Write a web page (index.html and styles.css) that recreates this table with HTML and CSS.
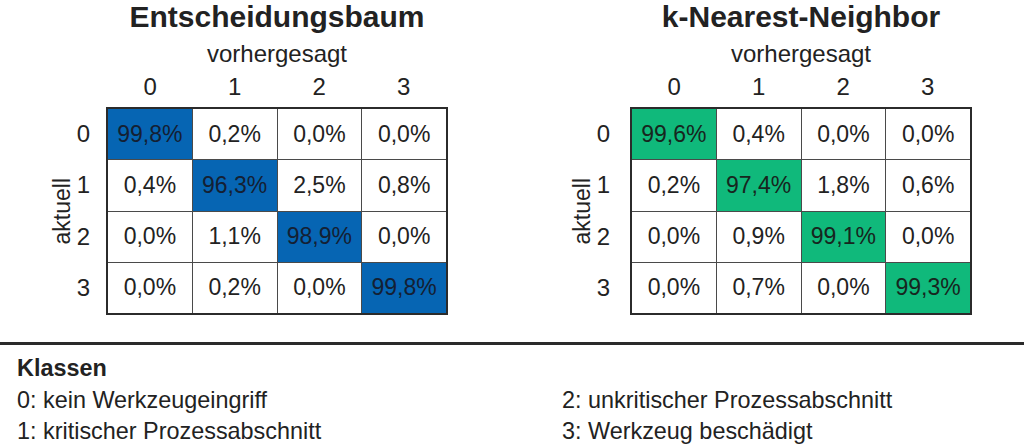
FILE: index.html
```html
<!DOCTYPE html>
<html lang="de">
<head>
<meta charset="utf-8">
<title>Konfusionsmatrizen</title>
<link rel="stylesheet" href="styles.css">
</head>
<body>
<main class="page">
  <section class="charts">
    <div class="panel panel--tree">
      <h2 class="title">Entscheidungsbaum</h2>
      <div class="subtitle">vorhergesagt</div>
      <div class="col-heads"><span>0</span><span>1</span><span>2</span><span>3</span></div>
      <div class="axis-label">aktuell</div>
      <div class="row-heads"><span>0</span><span>1</span><span>2</span><span>3</span></div>
      <div class="matrix matrix--blue">
        <div class="cell hit">99,8%</div><div class="cell">0,2%</div><div class="cell">0,0%</div><div class="cell">0,0%</div>
        <div class="cell">0,4%</div><div class="cell hit">96,3%</div><div class="cell">2,5%</div><div class="cell">0,8%</div>
        <div class="cell">0,0%</div><div class="cell">1,1%</div><div class="cell hit">98,9%</div><div class="cell">0,0%</div>
        <div class="cell">0,0%</div><div class="cell">0,2%</div><div class="cell">0,0%</div><div class="cell hit">99,8%</div>
      </div>
    </div>
    <div class="panel panel--knn">
      <h2 class="title">k-Nearest-Neighbor</h2>
      <div class="subtitle">vorhergesagt</div>
      <div class="col-heads"><span>0</span><span>1</span><span>2</span><span>3</span></div>
      <div class="axis-label">aktuell</div>
      <div class="row-heads"><span>0</span><span>1</span><span>2</span><span>3</span></div>
      <div class="matrix matrix--green">
        <div class="cell hit">99,6%</div><div class="cell">0,4%</div><div class="cell">0,0%</div><div class="cell">0,0%</div>
        <div class="cell">0,2%</div><div class="cell hit">97,4%</div><div class="cell">1,8%</div><div class="cell">0,6%</div>
        <div class="cell">0,0%</div><div class="cell">0,9%</div><div class="cell hit">99,1%</div><div class="cell">0,0%</div>
        <div class="cell">0,0%</div><div class="cell">0,7%</div><div class="cell">0,0%</div><div class="cell hit">99,3%</div>
      </div>
    </div>
  </section>
  <hr class="divider">
  <section class="legend">
    <h3 class="legend-title">Klassen</h3>
    <ul class="legend-list">
      <li>0: kein Werkzeugeingriff</li>
      <li>1: kritischer Prozessabschnitt</li>
      <li>2: unkritischer Prozessabschnitt</li>
      <li>3: Werkzeug beschädigt</li>
    </ul>
  </section>
</main>
</body>
</html>
```

FILE: styles.css
```css
* { box-sizing: border-box; }

html, body {
  margin: 0;
  padding: 0;
  background: #ffffff;
}

body {
  font-family: "Liberation Sans", Arial, sans-serif;
  color: #222222;
  width: 1024px;
  height: 446px;
  overflow: hidden;
}

.page {
  display: flex;
  flex-direction: column;
}

.charts {
  display: flex;
  height: 342px;
  padding-left: 50px;
  gap: 122px;
}

.panel {
  display: grid;
  grid-template-columns: 24px 32px 342px;
  grid-template-rows: auto auto auto 208px;
  align-content: start;
}

.panel--knn {
  grid-template-columns: 24px 36px 342px;
}

.title {
  grid-column: 3;
  grid-row: 1;
  margin: 0;
  font-size: 30px;
  line-height: 34px;
  font-weight: bold;
  text-align: center;
  color: #222222;
}

.subtitle {
  grid-column: 3;
  grid-row: 2;
  margin-top: 6px;
  font-size: 24px;
  line-height: 28px;
  text-align: center;
}

.col-heads {
  grid-column: 3;
  grid-row: 3;
  margin-top: 5px;
  margin-bottom: 6px;
  display: grid;
  grid-template-columns: repeat(4, 1fr);
  padding: 0 2px;
  font-size: 24px;
  line-height: 28px;
  text-align: center;
}

.axis-label {
  grid-column: 1;
  grid-row: 4;
  align-self: center;
  justify-self: center;
  writing-mode: vertical-rl;
  transform: rotate(180deg);
  font-size: 23px;
  line-height: 24px;
}

.row-heads {
  grid-column: 2;
  grid-row: 4;
  display: flex;
  flex-direction: column;
  gap: 1px;
  padding: 2px 0;
  font-size: 24px;
}

.row-heads span {
  flex: 1;
  display: flex;
  align-items: center;
  justify-content: flex-end;
  padding-right: 16px;
}

.panel--knn .row-heads span {
  padding-right: 20px;
}

.matrix {
  grid-column: 3;
  grid-row: 4;
  display: grid;
  grid-template-columns: repeat(4, 1fr);
  grid-template-rows: repeat(4, 1fr);
  gap: 1px;
  width: 342px;
  height: 208px;
  background: #4a4a4a;
  border: 2px solid #2b2b2b;
}

.cell {
  display: flex;
  align-items: center;
  justify-content: center;
  background: #ffffff;
  font-size: 23px;
  color: #222222;
}

.matrix--blue .hit {
  background: #0665b3;
  color: #142033;
}

.matrix--green .hit {
  background: #10b97b;
  color: #17261e;
}

.divider {
  margin: 0;
  border: 0;
  height: 3px;
  background: #2a2a2a;
  width: 100%;
}

.legend {
  padding: 8px 0 0 17px;
  font-size: 23.4px;
  line-height: 31.5px;
}

.legend-title {
  margin: 0;
  font-size: 23.4px;
  line-height: 31.5px;
  font-weight: bold;
}

.legend-list {
  margin: 0;
  padding: 0;
  list-style: none;
  display: grid;
  grid-template-columns: 545px auto;
  grid-template-rows: auto auto;
  grid-auto-flow: column;
}
```
